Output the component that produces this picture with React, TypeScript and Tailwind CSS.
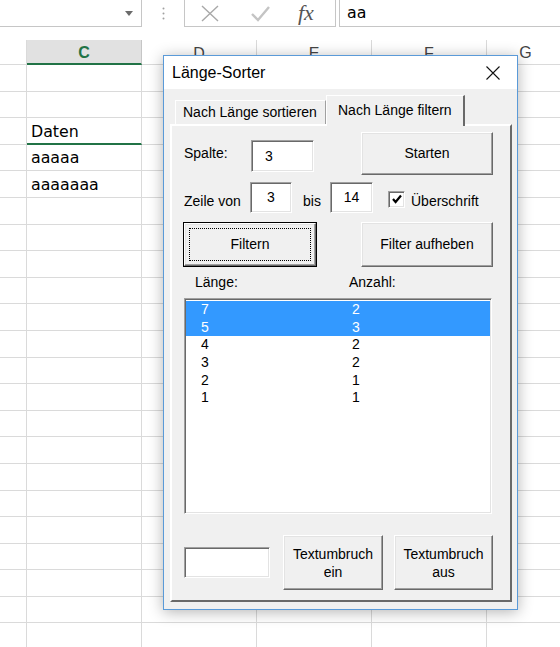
import React from "react";

const ROW_COUNT = 22;
const CELL_TEXT: Record<number, string> = { 2: "Daten", 3: "aaaaa", 4: "aaaaaaa" };

const LIST_ROWS = [
  { len: "7", count: "2", selected: true },
  { len: "5", count: "3", selected: true },
  { len: "4", count: "2", selected: false },
  { len: "3", count: "2", selected: false },
  { len: "2", count: "1", selected: false },
  { len: "1", count: "1", selected: false },
];

// Win32 classic 3D edges
const raised =
  "border border-t-white border-l-white border-r-[#696969] border-b-[#696969] shadow-[inset_-1px_-1px_0_#a0a0a0,inset_1px_1px_0_#e3e3e3] bg-[#f0f0f0]";
const sunken =
  "border border-t-[#a0a0a0] border-l-[#a0a0a0] border-r-white border-b-white shadow-[inset_1px_1px_0_#696969,inset_-1px_-1px_0_#e3e3e3] bg-white";

function FormulaBar() {
  return (
    <div className="flex h-[27px]">
      <div className="flex w-[142px] items-center justify-end border-r border-b border-[#c6c6c6] pr-[8px]">
        <svg width="8" height="5" viewBox="0 0 8 5">
          <path d="M0 0h8L4 5z" fill="#6b6b6b" />
        </svg>
      </div>
      <div className="flex w-[42px] items-center justify-center">
        <svg width="3" height="13" viewBox="0 0 3 13">
          <circle cx="1.5" cy="1.5" r="1" fill="#a0a0a0" />
          <circle cx="1.5" cy="6.5" r="1" fill="#a0a0a0" />
          <circle cx="1.5" cy="11.5" r="1" fill="#a0a0a0" />
        </svg>
      </div>
      <div className="flex w-[152px] items-center border-x border-b border-[#c6c6c6] pl-[15px]">
        <svg width="20" height="17" viewBox="0 0 20 17">
          <path d="M2 1L18 16M18 1L2 16" stroke="#a8a8a8" strokeWidth="1.4" fill="none" />
        </svg>
        <svg className="ml-[30px]" width="21" height="17" viewBox="0 0 21 17">
          <path d="M2 9l6 6L19 2" stroke="#c4c4c4" strokeWidth="2.4" fill="none" />
        </svg>
        <span className="ml-[27px] font-['Liberation_Serif',serif] text-[22px] italic leading-none text-[#555]">fx</span>
      </div>
      <div className="ml-[3px] flex flex-1 items-center border-l border-b border-[#c6c6c6] pl-[7px]">aa</div>
    </div>
  );
}

function HeaderRow() {
  return (
    <div className="flex h-[25px] font-['Liberation_Sans',sans-serif] text-[16px]">
      <div className="w-[27px] border-r border-b border-[#dadada]" />
      <div className="flex w-[115px] items-center justify-center border-r border-b-2 border-r-[#c6c6c6] border-b-[#217346] bg-[#e1e1e1] pt-[2px] font-bold text-[#217346]">
        C
      </div>
      <div className="flex w-[115px] items-center justify-center border-r border-b border-[#dadada] pt-[4px] text-[#444]">D</div>
      <div className="flex w-[115px] items-center justify-center border-r border-b border-[#dadada] pt-[4px] text-[#444]">E</div>
      <div className="flex w-[115px] items-center justify-center border-r border-b border-[#dadada] pt-[4px] text-[#444]">F</div>
      <div className="flex flex-1 items-center justify-center border-b border-[#dadada] pt-[2px] pl-[4px] text-[#444]">G</div>
    </div>
  );
}

function SheetRow({ index }: { index: number }) {
  const text = CELL_TEXT[index];
  return (
    <div className="flex h-[26.6px]">
      <div className="w-[27px] border-r border-b border-[#dadada]" />
      <div
        className={
          index === 2
            ? "flex w-[115px] items-end border-r border-b-2 border-r-[#dadada] border-b-[#217346] pb-[2px] pl-[4px] leading-[18px]"
            : "flex w-[115px] items-end border-r border-b border-[#dadada] pb-[3px] pl-[4px] leading-[18px]"
        }
      >
        {text}
      </div>
      <div className="w-[115px] border-r border-b border-[#dadada]" />
      <div className="w-[115px] border-r border-b border-[#dadada]" />
      <div className="w-[115px] border-r border-b border-[#dadada]" />
      <div className="flex-1 border-b border-[#dadada]" />
    </div>
  );
}

function Dialog() {
  return (
    <div className="absolute left-[163px] top-[55px] flex h-[555px] w-[355px] flex-col border border-[#5a9ad8] bg-[#f0f0f0] font-['Liberation_Sans',Arial,sans-serif] text-[14px] text-black shadow-[0_2px_14px_rgba(0,0,0,0.3)]">
      <div className="flex h-[33px] items-center justify-between bg-white pl-[8px] pr-[17px] text-[16px]">
        <span>Länge-Sorter</span>
        <svg width="14" height="14" viewBox="0 0 14 14">
          <path d="M0.5 0.5L13.5 13.5M13.5 0.5L0.5 13.5" stroke="#111" strokeWidth="1.1" fill="none" />
        </svg>
      </div>

      <div className="flex flex-col pl-[6px]">
        {/* tab strip */}
        <div className="flex h-[35px] items-end pl-[5px]">
          <div className="flex h-[24px] w-[151px] items-center border-t border-l border-r border-t-white border-l-white border-r-[#a0a0a0] pl-[7px]">
            Nach Länge sortieren
          </div>
          <div className="relative z-10 -mb-[2px] flex h-[31px] w-[139px] items-start border-t border-l border-r-2 border-t-white border-l-white border-r-[#696969] bg-[#f0f0f0] pt-[4px] pl-[11px]">
            Nach Länge filtern
          </div>
        </div>

        {/* tab page */}
        <div className="flex h-[478px] w-[342px] flex-col border-2 border-t-white border-l-white border-r-[#696969] border-b-[#696969] pt-[6px] pl-[12px]">
          <div className="flex h-[43px] items-center">
            <span className="w-[67px]">Spalte:</span>
            <div className={`${sunken} mt-[5px] flex h-[32px] w-[63px] items-center pl-[13px]`}>3</div>
            <div className={`${raised} ml-[47px] flex h-[43px] w-[132px] items-center justify-center`}>Starten</div>
          </div>

          <div className="mt-[7px] flex h-[31px] items-center">
            <span className="w-[66px] pt-[7px]">Zeile von</span>
            <div className={`${sunken} flex h-[31px] w-[42px] items-center justify-center`}>3</div>
            <span className="w-[38px] pt-[7px] pl-[11px]">bis</span>
            <div className={`${sunken} flex h-[31px] w-[43px] items-center justify-center`}>14</div>
            <div className={`${sunken} mt-[3px] ml-[15px] flex h-[17px] w-[17px] items-center justify-center`}>
              <svg width="10" height="10" viewBox="0 0 10 10">
                <path d="M1 5l2.6 3L9 1.5" stroke="#000" strokeWidth="2.2" fill="none" />
              </svg>
            </div>
            <span className="ml-[6px] pt-[7px]">Überschrift</span>
          </div>

          <div className="mt-[9px] flex h-[45px] items-start">
            <div className="-ml-[1px] h-[45px] w-[134px] border border-black">
              <div className={`${raised} h-full w-full p-[4px]`}>
                <div className="flex h-full w-full items-center justify-center border border-dotted border-black">Filtern</div>
              </div>
            </div>
            <div className={`${raised} ml-[44px] flex h-[45px] w-[132px] items-center justify-center`}>Filter aufheben</div>
          </div>

          <div className="flex h-[31px] items-center">
            <span className="w-[165px] pl-[11px]">Länge:</span>
            <span>Anzahl:</span>
          </div>

          <div className={`${sunken} flex h-[216px] w-[308px] flex-col px-[1px] pt-[2px]`}>
            {LIST_ROWS.map((row) => (
              <div
                key={row.len}
                className={
                  row.selected
                    ? "flex h-[17.6px] items-center bg-[#3399ff] text-white"
                    : "flex h-[17.6px] items-center"
                }
              >
                <span className="w-[166px] pl-[15px]">{row.len}</span>
                <span>{row.count}</span>
              </div>
            ))}
          </div>

          <div className="mt-[21px] flex h-[55px] items-center">
            <div className={`${sunken} h-[31px] w-[86px]`} />
            <div className={`${raised} ml-[13px] flex h-[55px] w-[100px] flex-col items-center justify-center leading-[18px]`}>
              <span>Textumbruch</span>
              <span>ein</span>
            </div>
            <div className={`${raised} ml-[11px] flex h-[55px] w-[99px] flex-col items-center justify-center leading-[18px]`}>
              <span>Textumbruch</span>
              <span>aus</span>
            </div>
          </div>
        </div>
      </div>
    </div>
  );
}

export default function App() {
  return (
    <div className="relative h-[647px] w-[560px] overflow-hidden bg-white font-['DejaVu_Sans',sans-serif] text-[15.8px] text-black">
      <FormulaBar />
      <div className="h-[13px]" />
      <HeaderRow />
      {Array.from({ length: ROW_COUNT }, (_, i) => (
        <SheetRow key={i} index={i} />
      ))}
      <Dialog />
    </div>
  );
}
